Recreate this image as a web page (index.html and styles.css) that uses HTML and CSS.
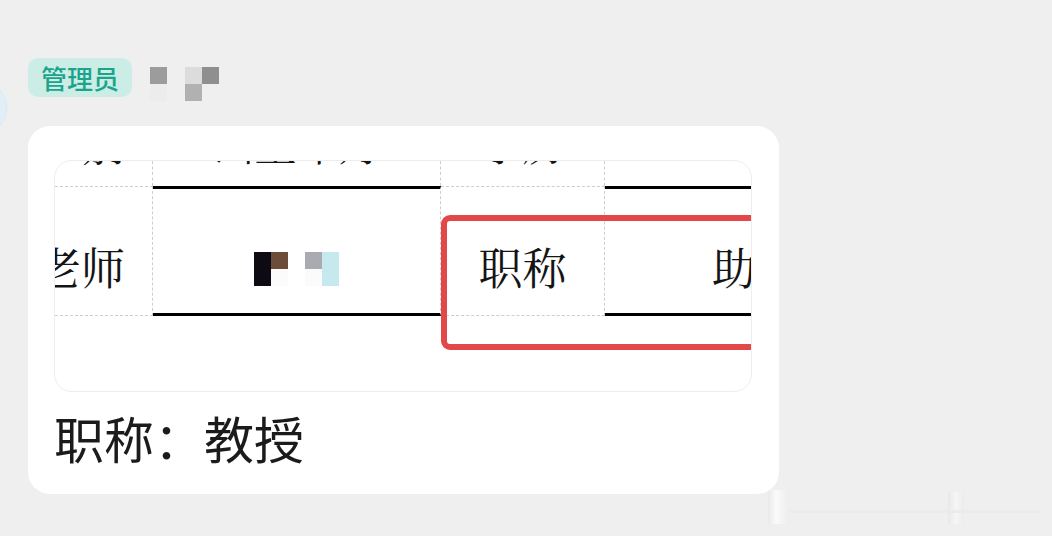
FILE: index.html
```html
<!DOCTYPE html>
<html lang="zh-CN">
<head>
<meta charset="utf-8">
<title>管理员</title>
<link rel="stylesheet" href="styles.css">
</head>
<body>
<div class="avatar"></div>
<main class="page">
  <div class="header">
    <span class="badge">管理员</span>
    <div class="mosaic">
      <i class="m1"></i><i></i><i class="m2"></i><i class="m3"></i>
      <i class="m5"></i><i></i><i class="m4"></i><i></i>
    </div>
  </div>
  <section class="card">
    <div class="shot">
      <div class="cell top c1"><span class="cut">别</span></div>
      <div class="cell top c2"><span class="cut">出生年月</span></div>
      <div class="cell top c3"><span class="cut">学历</span></div>
      <div class="cell top c4"></div>

      <div class="cell mid thin c1 right"><span class="tt">老师</span></div>
      <div class="cell mid thick c2 center">
        <div class="pix">
          <i class="p1"></i><i class="p2"></i><i></i><i class="p3"></i><i class="p4"></i>
          <i class="p1"></i><i class="p0"></i><i></i><i class="p0"></i><i class="p4"></i>
        </div>
      </div>
      <div class="cell mid thin c3 center"><span class="tt">职称</span></div>
      <div class="cell mid thick c4 clip"><span class="tt">助教</span></div>

      <div class="cell bot"></div>
      <div class="cell bot"></div>
      <div class="cell bot"></div>
      <div class="cell bot"></div>

      <div class="mark"></div>
    </div>
    <p class="caption">职称：教授</p>
  </section>
</main>
<div class="ghost g1"></div>
<div class="ghost g2"></div>
<div class="ghost line"></div>
</body>
</html>
```

FILE: styles.css
```css
html, body {
  margin: 0;
  padding: 0;
}

body {
  background: #efefef;
  font-family: "Noto Sans CJK SC", "Noto Sans", sans-serif;
  width: 1052px;
  height: 536px;
  overflow: hidden;
  position: relative;
}

.avatar {
  position: absolute;
  left: -46px;
  top: 82px;
  width: 52px;
  height: 52px;
  border-radius: 50%;
  background: #e0eff5;
  box-shadow: 1px 0 2px #d3eaf3;
}

.page {
  padding: 58px 0 0 28px;
}

.header {
  display: flex;
  align-items: flex-start;
  gap: 18px;
  height: 39px;
}

.badge {
  display: block;
  height: 39px;
  line-height: 39px;
  padding: 0 13px;
  border-radius: 10px;
  background: #ccede6;
  color: #1ba48c;
  font-size: 26px;
  font-weight: 500;
}

.mosaic {
  margin-top: 9px;
  display: grid;
  grid-template-columns: 17px 18px 17px 17px;
  grid-template-rows: 17px 17px;
}

.mosaic i { display: block; }
.mosaic .m1 { background: #9c9c9c; }
.mosaic .m2 { background: #dcdcdc; }
.mosaic .m3 { background: #8f8f8f; }
.mosaic .m4 { background: #b1b1b1; }
.mosaic .m5 { background: #ececec; }

.card {
  margin-top: 29px;
  width: 751px;
  box-sizing: border-box;
  padding: 34px 27px 29px 26px;
  background: #ffffff;
  border-radius: 22px;
}

.shot {
  position: relative;
  box-sizing: border-box;
  width: 698px;
  height: 232px;
  border: 1px solid #ededed;
  border-radius: 18px;
  overflow: hidden;
  background: #ffffff;
  display: grid;
  grid-template-columns: 98px 288px 164px 1fr;
  grid-template-rows: 25px 130px 1fr;
  font-family: "Noto Serif CJK SC", "Noto Sans CJK SC", serif;
  color: #141414;
}

.cell {
  box-sizing: border-box;
  display: flex;
  overflow: hidden;
  white-space: nowrap;
}

.top {
  justify-content: center;
  border-right: 1px dashed #cdcdcd;
}

.top.c4 { border-right: none; }

.cut {
  font-size: 42px;
  line-height: 42px;
  margin-top: -39px;
}

.mid.thin {
  border-top: 1px dashed #cdcdcd;
  border-bottom: 1px dashed #cdcdcd;
  padding-top: 57px;
}

.mid.thick {
  border-top: 3px solid #000000;
  border-bottom: 3px solid #000000;
  padding-top: 55px;
}

.mid.c1, .mid.c2, .mid.c3 {
  border-right: 1px dashed #cdcdcd;
}

.right {
  justify-content: flex-end;
  padding-right: 27px;
}

.center {
  justify-content: center;
}

.clip {
  padding-left: 107px;
}

.tt {
  font-size: 44px;
  line-height: 44px;
}

.mid.c2 {
  padding-top: 63px;
}

.pix {
  display: grid;
  grid-template-columns: repeat(5, 17px);
  grid-template-rows: 17px 17px;
  height: 34px;
}

.pix i { display: block; }
.pix .p0 { background: #fbfbfb; }
.pix .p1 { background: #0e0a14; }
.pix .p2 { background: #6c4d3a; }
.pix .p3 { background: #a9abb0; }
.pix .p4 { background: #c6e9f0; }

.mark {
  position: absolute;
  left: 386px;
  top: 54px;
  right: -30px;
  height: 135px;
  box-sizing: border-box;
  border: 6px solid #e2474a;
  border-radius: 9px;
}

.caption {
  margin: 17px 0 0 0;
  font-size: 50px;
  line-height: 56px;
  color: #1b1b1b;
}

.ghost {
  position: absolute;
}

.ghost.g1 {
  left: 768px;
  top: 490px;
  width: 20px;
  height: 34px;
  background: linear-gradient(90deg, #e9e9e9, #fafafa 40%, #eeeeee);
  border-radius: 3px;
}

.ghost.g2 {
  left: 948px;
  top: 492px;
  width: 16px;
  height: 32px;
  background: linear-gradient(90deg, #e8e8e8, #f6f6f6 50%, #ebebeb);
  border-radius: 2px;
}

.ghost.line {
  left: 790px;
  top: 510px;
  width: 250px;
  height: 3px;
  background: #ebebeb;
}
```
